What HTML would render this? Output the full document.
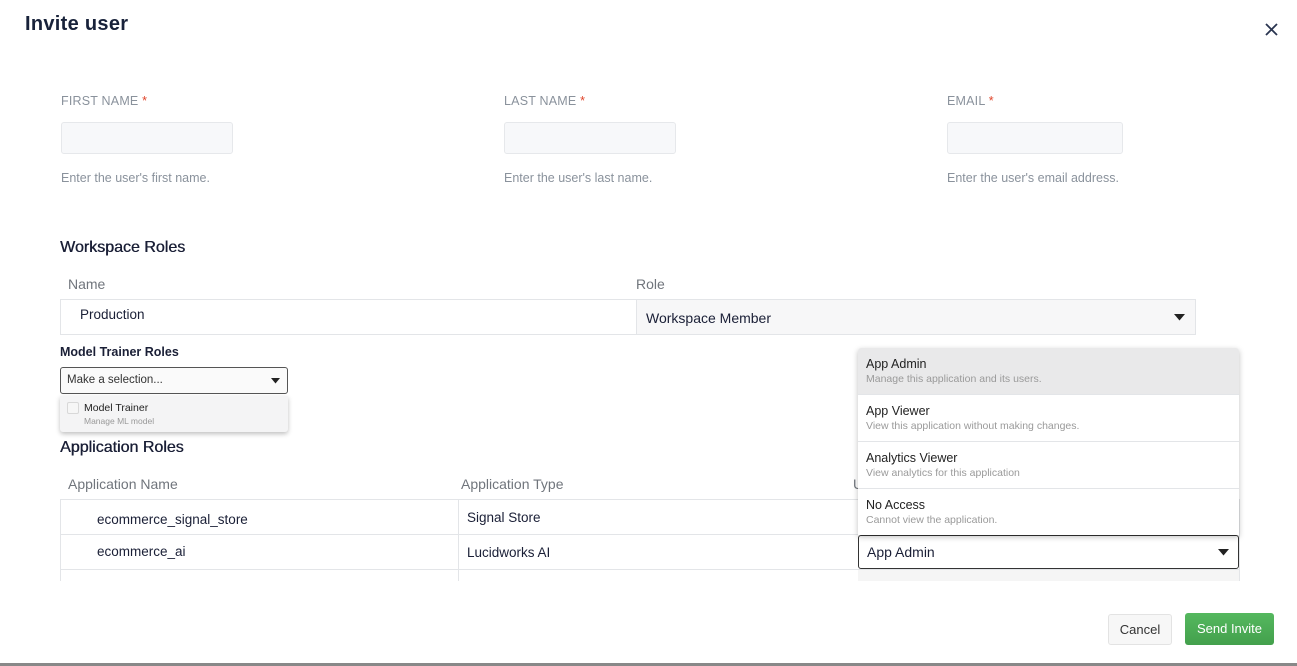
<!DOCTYPE html>
<html><head><style>
*{box-sizing:border-box;margin:0;padding:0}
body{width:1297px;height:666px;overflow:hidden;background:#fff;font-family:"Liberation Sans",sans-serif;position:relative;color:#1a1f36}
.a{position:absolute}
.lbl{font-size:12.5px;color:#8a929c;letter-spacing:.2px}
.lbl b{color:#e0452b;font-weight:normal}
.inp{width:172px;height:32px;background:#f7f8fa;border:1px solid #e6e8eb;border-radius:3px}
.hint{font-size:12.5px;color:#8a929c}
.h2{font-size:16px;color:#1a1f36;text-shadow:0.4px 0 0 #1a1f36}
.th{font-size:14px;color:#70757c}
.cell{font-size:13.5px;color:#1a1f36}
.ln{background:#e3e5e8}
</style></head><body>
<div class="a" style="left:25px;top:13px;font-size:20px;font-weight:bold;color:#18223a;letter-spacing:.3px">Invite user</div>
<svg class="a" style="left:1265px;top:23px" width="13" height="13" viewBox="0 0 13 13"><path d="M1 1L12 12M12 1L1 12" stroke="#2a3550" stroke-width="1.8"/></svg>

<div class="a lbl" style="left:61px;top:94px">FIRST NAME <b>*</b></div>
<div class="a inp" style="left:61px;top:122px"></div>
<div class="a hint" style="left:61px;top:171px">Enter the user's first name.</div>
<div class="a lbl" style="left:504px;top:94px">LAST NAME <b>*</b></div>
<div class="a inp" style="left:504px;top:122px"></div>
<div class="a hint" style="left:504px;top:171px">Enter the user's last name.</div>
<div class="a lbl" style="left:947px;top:94px">EMAIL <b>*</b></div>
<div class="a inp" style="left:947px;top:122px;width:176px"></div>
<div class="a hint" style="left:947px;top:171px">Enter the user's email address.</div>

<div class="a h2" style="left:60px;top:239px">Workspace Roles</div>
<div class="a th" style="left:68px;top:276px">Name</div>
<div class="a th" style="left:636px;top:276px">Role</div>
<div class="a ln" style="left:60px;top:299px;width:1136px;height:1px"></div>
<div class="a ln" style="left:60px;top:334px;width:1136px;height:1px"></div>
<div class="a ln" style="left:60px;top:299px;width:1px;height:36px"></div>
<div class="a cell" style="left:80px;top:307px">Production</div>
<div class="a" style="left:636px;top:300px;width:560px;height:34px;background:#f7f7f8;border-left:1px solid #e3e5e8;border-right:1px solid #e3e5e8"></div>
<div class="a" style="left:646px;top:310px;font-size:14px;color:#1a1f36">Workspace Member</div>
<svg class="a" style="left:1174px;top:314px" width="11" height="7"><path d="M0 0H11L5.5 6.5Z" fill="#222"/></svg>

<div class="a" style="left:60px;top:345px;font-size:12.5px;font-weight:bold;color:#1a1f36">Model Trainer Roles</div>
<div class="a" style="left:60px;top:367px;width:228px;height:27px;border:1px solid #555;border-radius:3px;background:#fafafa"></div>
<div class="a" style="left:67px;top:374px;font-size:11.5px;color:#333">Make a selection...</div>
<svg class="a" style="left:271px;top:378px" width="9" height="6"><path d="M0 0H9L4.5 5.5Z" fill="#222"/></svg>
<div class="a" style="left:60px;top:396px;width:228px;height:36px;background:#f4f4f5;border-radius:0 0 3px 3px;box-shadow:0 2px 5px rgba(0,0,0,.25)"></div>
<div class="a" style="left:67px;top:402px;width:12px;height:12px;border:1px solid #d8d8d8;border-radius:2px;background:#f6f6f6"></div>
<div class="a" style="left:84px;top:402px;font-size:10.5px;color:#222">Model Trainer</div>
<div class="a" style="left:84px;top:416px;font-size:8.5px;color:#999">Manage ML model</div>

<div class="a h2" style="left:60px;top:439px">Application Roles</div>
<div class="a th" style="left:68px;top:476px">Application Name</div>
<div class="a th" style="left:461px;top:476px">Application Type</div>
<div class="a th" style="left:853px;top:476px">U</div>
<div class="a ln" style="left:60px;top:499px;width:1180px;height:1px"></div>
<div class="a ln" style="left:60px;top:534px;width:1180px;height:1px"></div>
<div class="a ln" style="left:60px;top:569px;width:1180px;height:1px"></div>
<div class="a ln" style="left:60px;top:499px;width:1px;height:82px"></div>
<div class="a ln" style="left:458px;top:499px;width:1px;height:82px"></div>
<div class="a ln" style="left:1239px;top:499px;width:1px;height:82px"></div>
<div class="a cell" style="left:97px;top:512px">ecommerce_signal_store</div>
<div class="a cell" style="left:97px;top:544px">ecommerce_ai</div>
<div class="a cell" style="left:467px;top:510px">Signal Store</div>
<div class="a cell" style="left:467px;top:545px">Lucidworks AI</div>
<div class="a" style="left:858px;top:570px;width:381px;height:11px;background:#f5f5f5"></div>
<div class="a" style="left:858px;top:535px;width:381px;height:34px;border:1px solid #333;border-radius:3px;background:#fff"></div>
<div class="a" style="left:867px;top:544px;font-size:14px;color:#1a1f36">App Admin</div>
<svg class="a" style="left:1218px;top:549px" width="11" height="7"><path d="M0 0H11L5.5 6.5Z" fill="#222"/></svg>

<div class="a" style="left:858px;top:348px;width:381px;height:187px;background:#fff;box-shadow:0 2px 6px rgba(0,0,0,.25);border-radius:3px 3px 0 0;overflow:hidden">
 <div style="height:47px;background:#e9e9ea;padding:9px 8px;border-bottom:1px solid #e3e5e8"><div style="font-size:12.5px;color:#222">App Admin</div><div style="font-size:10.5px;color:#9a9a9a;margin-top:2px">Manage this application and its users.</div></div>
 <div style="height:47px;padding:9px 8px;border-bottom:1px solid #e3e5e8"><div style="font-size:12.5px;color:#222">App Viewer</div><div style="font-size:10.5px;color:#9a9a9a;margin-top:2px">View this application without making changes.</div></div>
 <div style="height:47px;padding:9px 8px;border-bottom:1px solid #e3e5e8"><div style="font-size:12.5px;color:#222">Analytics Viewer</div><div style="font-size:10.5px;color:#9a9a9a;margin-top:2px">View analytics for this application</div></div>
 <div style="height:46px;padding:9px 8px"><div style="font-size:12.5px;color:#222">No Access</div><div style="font-size:10.5px;color:#9a9a9a;margin-top:2px">Cannot view the application.</div></div>
</div>

<div class="a" style="left:1108px;top:614px;width:64px;height:31px;background:#f7f7f7;border:1px solid #e3e3e3;border-radius:3px;font-size:13px;color:#333;text-align:center;line-height:29px">Cancel</div>
<div class="a" style="left:1185px;top:613px;width:89px;height:32px;background:linear-gradient(#55b85f,#43a04c);border-radius:3px;font-size:13px;color:#fff;text-align:center;line-height:32px">Send Invite</div>
<div class="a" style="left:0;top:663px;width:1297px;height:3px;background:#888"></div>
</body></html>
